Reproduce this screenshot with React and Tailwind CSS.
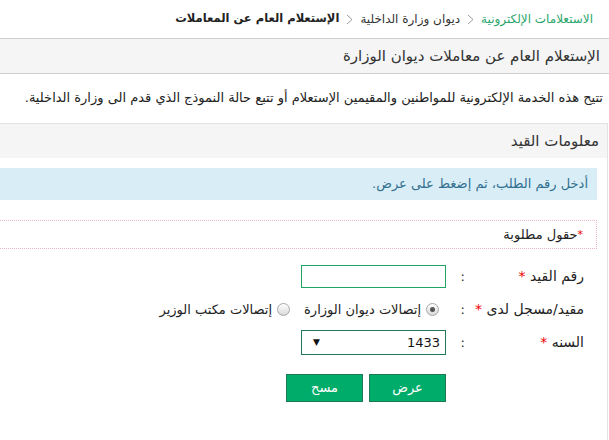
import React from "react";

const font = { fontFamily: '"DejaVu Sans", sans-serif' };

function Radio({ checked }) {
  return (
    <span className="inline-flex w-[13px] h-[13px] rounded-full border border-[#a6a6a6] bg-gradient-to-b from-white to-[#d9d9d9] items-center justify-center shrink-0">
      {checked && <span className="w-[5px] h-[5px] rounded-full bg-[#555]" />}
    </span>
  );
}

function Chevron() {
  return (
    <svg width="7" height="11" viewBox="0 0 7 11" className="shrink-0">
      <path d="M1 1l5 4.5L1 10" fill="none" stroke="#9a9a9a" strokeWidth="1" />
    </svg>
  );
}

function Row({ label, children, className = "" }) {
  return (
    <div className={`flex items-center ${className}`}>
      <div className="w-[114px] text-[14px] text-[#222]">
        {label} <span className="text-[#e00]">*</span>
      </div>
      <div className="w-[24px] pr-[5px] text-[13px] text-[#222]">:</div>
      <div className="flex items-center">{children}</div>
    </div>
  );
}

export default function App() {
  return (
    <div dir="rtl" className="w-[609px] h-[440px] overflow-hidden bg-white text-[#333]" style={font}>
      {/* breadcrumb */}
      <div className="h-[38px] flex items-center pr-[16px] text-[12px] gap-[7px]">
        <span className="text-[#2aa56c]">الاستعلامات الإلكترونية</span>
        <Chevron />
        <span className="text-[#333]">ديوان وزارة الداخلية</span>
        <Chevron />
        <span className="font-bold text-[11.5px] text-[#222]">الإستعلام العام عن المعاملات</span>
      </div>

      {/* title bar */}
      <div className="h-[36px] bg-[#f5f5f5] border-y border-[#cfcfcf] flex items-center pr-[9px] text-[15px] text-[#333]">
        الإستعلام العام عن معاملات ديوان الوزارة
      </div>

      <p className="pr-[6px] pt-[14px] text-[13px] text-[#222] leading-[20px]">
        تتيح هذه الخدمة الإلكترونية للمواطنين والمقيمين الإستعلام أو تتبع حالة النموذج الذي قدم الى وزارة الداخلية.
      </p>

      {/* panel */}
      <div className="mt-[15px] mr-[1px] border border-l-0 border-[#e3e3e3] h-[320px]">
        <div className="h-[34px] bg-[#f5f5f5] flex items-center pr-[8px] text-[15px] text-[#333]">
          معلومات القيد
        </div>

        <div className="pr-[10px]">
          <div className="mt-[10px] h-[32px] bg-[#d9edf7] flex items-center pr-[9px] text-[13px] text-[#31708f]">
            أدخل رقم الطلب، ثم إضغط على عرض.
          </div>

          <div className="mt-[20px] h-[29px] border border-dotted border-l-0 border-[#e8b7c8] flex items-center pr-[13px] text-[13px] text-[#222]">
            <span className="text-[#e00] text-[11px] self-start mt-[6px]">*</span>
            حقول مطلوبة
          </div>
        </div>

        <div className="pr-[23px] pt-[16px] flex flex-col">
          <Row label="رقم القيد">
            <input
              type="text"
              className="w-[145px] h-[23px] border border-[#1fa463] outline-none bg-white"
            />
          </Row>

          <Row label="مقيد/مسجل لدى" className="mt-[11px]">
            <label className="flex items-center gap-[5px] text-[13px] text-[#222] mr-[7px]">
              <Radio checked />
              <span>إتصالات ديوان الوزارة</span>
            </label>
            <label className="flex items-center gap-[5px] text-[13px] text-[#222] mr-[14px]">
              <Radio />
              <span>إتصالات مكتب الوزير</span>
            </label>
          </Row>

          <Row label="السنه" className="mt-[10px]">
            <div className="w-[145px] h-[25px] border border-[#1d7a55] flex items-center justify-between px-[5px] text-[13px] text-[#111]">
              <span>1433</span>
              <span className="text-[9px] ml-[6px]">▼</span>
            </div>
          </Row>

          <div className="flex mt-[19px] mr-[138px] gap-[6px]">
            <button className="w-[77px] h-[28px] bg-[#00ac6a] border border-[#1b7b56] text-white text-[13px]">
              عرض
            </button>
            <button className="w-[77px] h-[28px] bg-[#00ac6a] border border-[#1b7b56] text-white text-[13px]">
              مسح
            </button>
          </div>
        </div>
      </div>
    </div>
  );
}
